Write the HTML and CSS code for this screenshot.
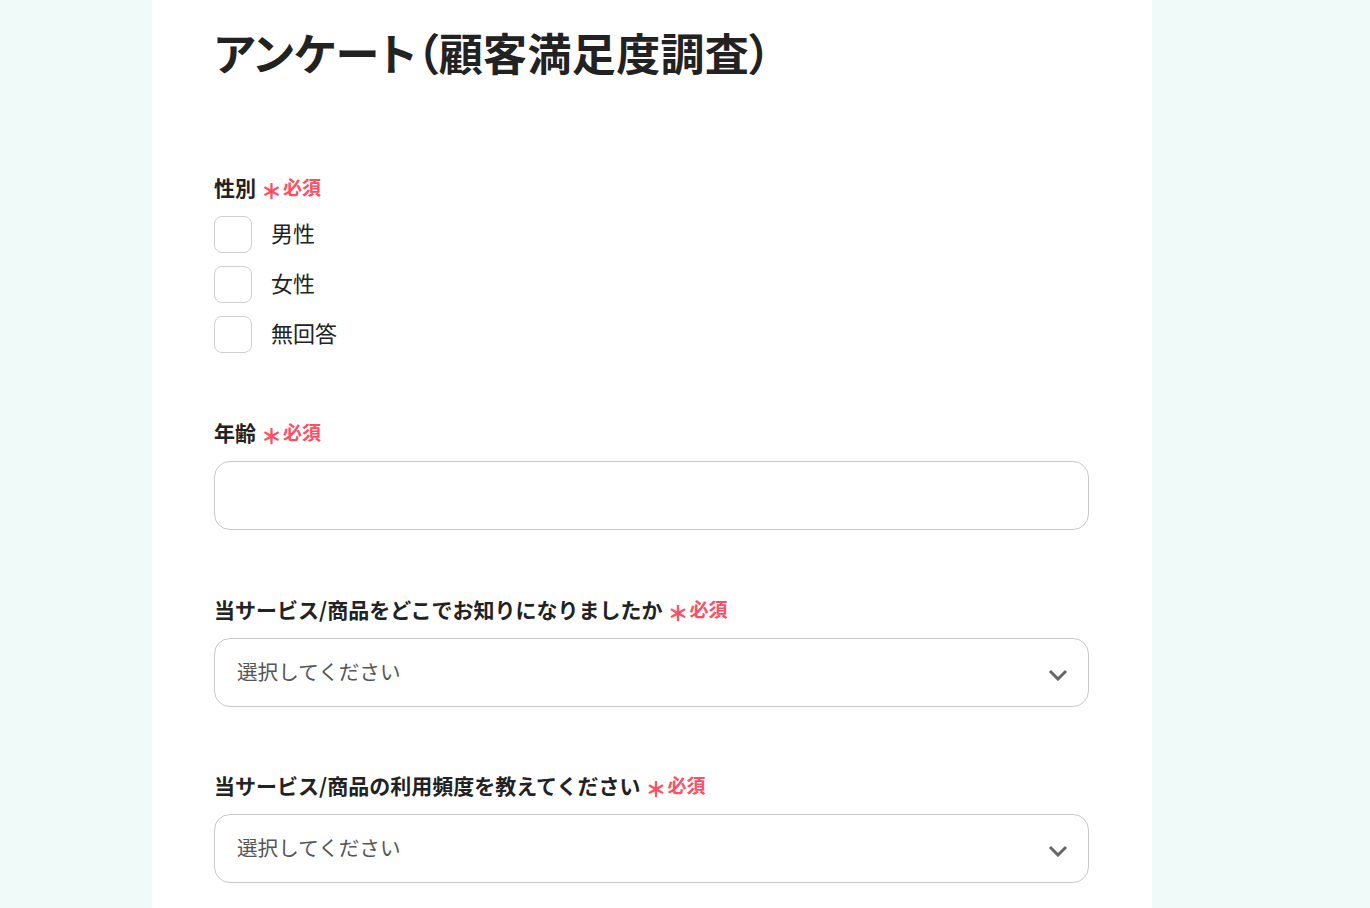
FILE: index.html
```html
<!DOCTYPE html>
<html lang="ja">
<head>
<meta charset="utf-8">
<link rel="stylesheet" href="styles.css">
</head>
<body>
<main class="panel">
  <h1 class="title">アンケート（顧客満足度調査）</h1>

  <section class="field field-first">
    <div class="label">性別<span class="req"><span class="ast">＊</span>必須</span></div>
    <div class="checks">
      <label class="check"><span class="box"></span><span class="check-text">男性</span></label>
      <label class="check"><span class="box"></span><span class="check-text">女性</span></label>
      <label class="check"><span class="box"></span><span class="check-text">無回答</span></label>
    </div>
  </section>

  <section class="field">
    <div class="label">年齢<span class="req"><span class="ast">＊</span>必須</span></div>
    <div class="input"></div>
  </section>

  <section class="field">
    <div class="label">当サービス/商品をどこでお知りになりましたか<span class="req"><span class="ast">＊</span>必須</span></div>
    <div class="select">
      <span class="placeholder">選択してください</span>
      <svg class="chev" width="20" height="12" viewBox="0 0 20 12"><path d="M2 2 L10 10 L18 2" fill="none" stroke="#666" stroke-width="3"/></svg>
    </div>
  </section>

  <section class="field field-tight">
    <div class="label">当サービス/商品の利用頻度を教えてください<span class="req"><span class="ast">＊</span>必須</span></div>
    <div class="select">
      <span class="placeholder">選択してください</span>
      <svg class="chev" width="20" height="12" viewBox="0 0 20 12"><path d="M2 2 L10 10 L18 2" fill="none" stroke="#666" stroke-width="3"/></svg>
    </div>
  </section>
</main>
</body>
</html>
```

FILE: styles.css
```css
html, body {
  margin: 0;
  padding: 0;
  background: #f0faf9;
  font-family: "Noto Sans CJK JP", "Noto Sans", sans-serif;
  color: #222;
}
.panel {
  margin-left: 152px;
  width: 1000px;
  min-height: 908px;
  background: #fff;
  box-sizing: border-box;
  padding: 19px 63px 40px 62px;
}
.title {
  margin: 0;
  font-size: 44px;
  line-height: 66px;
  font-weight: 700;
  color: #222;
  font-feature-settings: "palt";
  letter-spacing: 0.35px;
}
.field {
  margin-top: 64px;
}
.field-first {
  margin-top: 87px;
}
.field-tight {
  margin-top: 63px;
}
.label {
  font-size: 21px;
  line-height: 30px;
  font-weight: 700;
  color: #222;
  display: flex;
  align-items: center;
}
.req {
  color: #ff4d63;
  font-size: 19px;
  font-weight: 700;
  margin-left: 5px;
  display: inline-flex;
  align-items: center;
}
.ast {
  font-size: 21px;
  font-weight: 900;
  margin-right: 1px;
  position: relative;
  top: 3px;
}
.checks {
  margin-top: 14px;
  display: flex;
  flex-direction: column;
  gap: 13px;
}
.check {
  display: flex;
  align-items: center;
  gap: 19px;
}
.box {
  width: 36px;
  height: 35px;
  border: 1px solid #cfcfcf;
  border-radius: 8px;
  background: #fff;
}
.check-text {
  font-size: 22px;
  line-height: 30px;
  color: #222;
  margin-top: -5px;
}
.input, .select {
  margin-top: 14px;
  box-sizing: border-box;
  width: 875px;
  height: 69px;
  border: 1px solid #c8c8c8;
  border-radius: 16px;
  background: #fff;
}
.select {
  display: flex;
  align-items: center;
  justify-content: space-between;
  padding: 0 20px 0 22px;
}
.placeholder {
  font-size: 20.6px;
  line-height: 30px;
  color: #555;
  margin-top: -4px;
}
.chev {
  display: block;
  margin-top: 5px;
}
```
